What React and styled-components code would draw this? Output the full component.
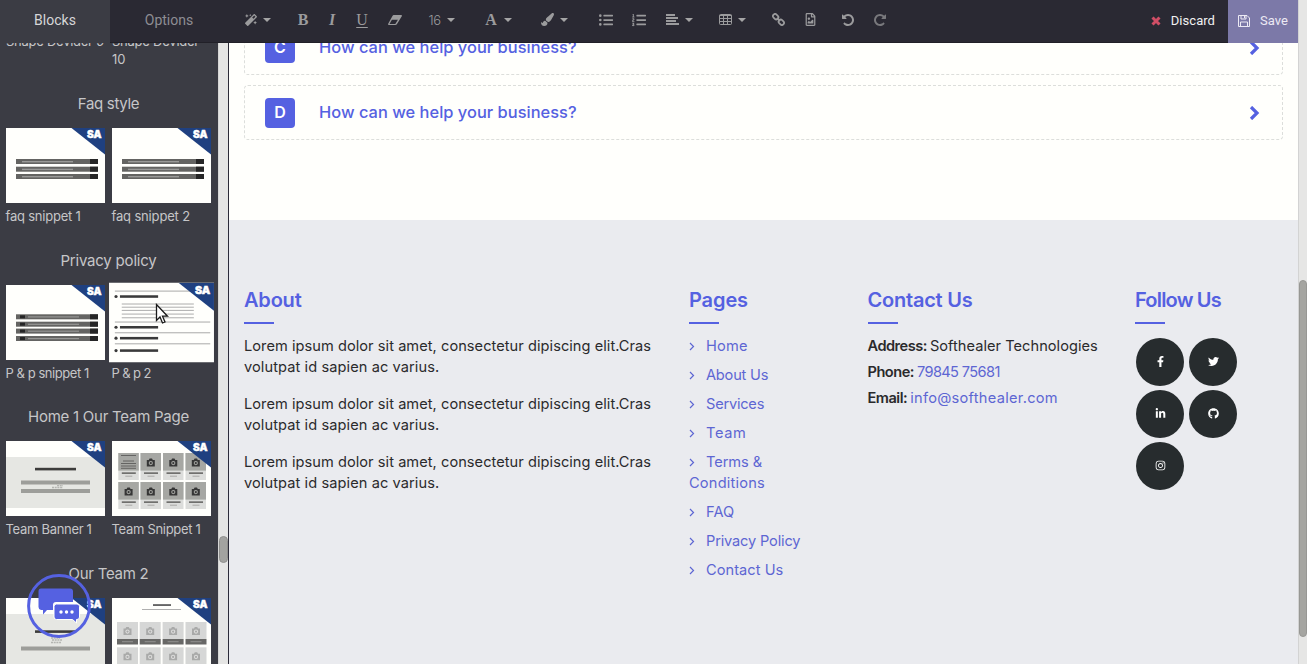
import React from "react";
import styled, { createGlobalStyle, css } from "styled-components";
import {
  FaMagic, FaPaintBrush, FaListUl, FaListOl, FaRegFileImage,
  FaFacebookF, FaTwitter, FaLinkedinIn, FaGithub, FaInstagram,
} from "react-icons/fa";

const blue = "#5561e1";
const link = "#5d66d3";

const GlobalStyle = createGlobalStyle`
  * { box-sizing: border-box; }
  body { margin: 0; font-family: Inter, "Open Sans", sans-serif; }
  svg { display: block; flex: none; }
`;

const Page = styled.div`
  position: relative;
  display: flex;
  width: 1307px;
  height: 664px;
  overflow: hidden;
  background: #fffffc;
`;
const Editor = styled.div`
  display: flex;
  flex-direction: column;
  width: 1298px;
  height: 100%;
`;
const Workspace = styled.div`
  display: flex;
  flex: 1;
  min-height: 0;
`;
const Txt = styled.span`
  letter-spacing: ${(p) => p.$ls || 0}px;
  white-space: nowrap;
`;

/* Top bar */
const TopBar = styled.header`
  display: flex;
  flex: none;
  height: 43px;
  background: #2a2933;
  border-bottom: 1px solid #212028;
  font-family: Roboto, sans-serif;
`;
const Tab = styled.div`
  width: ${(p) => p.$w}px;
  height: 43px;
  line-height: 41px;
  text-align: center;
  font-size: 14px;
  color: ${(p) => (p.$active ? "#d6d6d8" : "#8e8d93")};
  background: ${(p) => (p.$active ? "#3b3c44" : "transparent")};
`;
const Tools = styled.div`
  display: flex;
  align-items: center;
  flex: 1;
  height: 39px;
  color: #9b9b9d;
`;
const Tool = styled.div`
  display: flex;
  align-items: center;
  justify-content: center;
  width: ${(p) => p.$w}px;
  margin-left: ${(p) => p.$ml}px;
  opacity: ${(p) => (p.$dim ? 0.7 : 1)};
`;
const Caret = styled.i`
  margin-left: ${(p) => p.$ml}px;
  border: 4px solid transparent;
  border-top-color: #a5a5a6;
  border-bottom: 0;
`;
const Glyph = styled.span`
  font: bold 16px/20px "Liberation Serif", serif;
  ${(p) => p.$italic && css`font-style: italic;`}
  ${(p) => p.$under && css`font-weight: normal; text-decoration: underline; text-underline-offset: 2px;`}
`;
const FontSize = styled.span`
  font: 300 13px Inter, sans-serif;
  letter-spacing: -0.5px;
`;
const Discard = styled.div`
  display: flex;
  align-items: center;
  gap: 10px;
  height: 41px;
  padding-right: 13px;
  font-size: 13px;
  letter-spacing: 0.05px;
  color: #f1f1f2;
`;
const Save = styled(Discard)`
  width: 70px;
  height: 43px;
  padding: 0 0 2px 10px;
  background: #7c79a8;
  color: #eceaf4;
`;

/* Snippet sidebar */
const Sidebar = styled.aside`
  width: 218px;
  background: #3b3c44;
  overflow: hidden;
  color: #c6c6c8;
`;
const SidebarTrack = styled.div`
  width: 11px;
  padding-top: 493px;
  background: #e5e5e4;
  border-left: 1px solid #d6d6d5;
  border-right: 1px solid #2c2b38;
`;
const SidebarThumb = styled.div`
  height: 27px;
  border-radius: 5px;
  background: #a3a3a0;
  border: 1px solid #8f8f8d;
`;
const Cells = styled.div`
  display: grid;
  grid-template-columns: 99px 99px;
  column-gap: 7px;
  padding-left: 6px;
`;
const ScrolledRow = styled(Cells)`
  height: 48px;
  margin-top: -11px;
  font-size: 13px;
  line-height: 18px;
`;
const Section = styled.section`
  height: 156.6px;
`;
const SectionTitle = styled.h3`
  margin: 0;
  height: 48px;
  width: 217px;
  line-height: 48px;
  text-align: center;
  font-size: 15px;
  font-weight: 400;
`;
const Label = styled.div`
  height: 27px;
  margin-left: -0.5px;
  line-height: 27px;
  font-size: 13px;
`;
const Preview = styled.svg`
  width: 99px;
  height: 75px;
  background: #fffffc;
  ${(p) => p.$hover && css`transform: scale(1.06);`}
`;

/* Page canvas */
const Canvas = styled.main`
  flex: 1;
  min-width: 0;
  overflow: hidden;
`;
const Faq = styled.div`
  display: flex;
  flex-direction: column;
  gap: 10px;
  height: 200px;
  margin: -23px 15px 0;
`;
const FaqItem = styled.div`
  display: flex;
  align-items: center;
  height: 55px;
  flex: none;
  padding: 0 22px 0 20px;
  border: 1px dashed #dcdedb;
  border-radius: 4px;
  color: ${blue};
  font-size: 16px;
  font-weight: 500;
`;
const Badge = styled.span`
  width: 30px;
  height: 30px;
  margin-right: 24px;
  border-radius: 4px;
  background: ${blue};
  color: #fff;
  text-align: center;
  line-height: 29px;
  font-weight: 600;
`;
const Question = styled.span`
  flex: 1;
  padding-bottom: 2px;
  font-size: 16.4px;
  letter-spacing: 0.03px;
`;
const Footer = styled.footer`
  display: grid;
  grid-template-columns: 445px 178.5px 267.5px 1fr;
  height: 444px;
  padding: 67px 0 0 15px;
  background: #eaebef;
  color: #2a2a2c;
  font-size: 14.6px;
  line-height: 21px;
`;
const Heading = styled.h4`
  position: relative;
  margin: 0 0 12px;
  height: 37px;
  line-height: 26px;
  font-size: 20px;
  font-weight: 600;
  color: ${blue};
  letter-spacing: ${(p) => p.$ls}px;
  &::after {
    content: "";
    position: absolute;
    left: 0;
    bottom: 0;
    width: 30px;
    height: 2px;
    background: ${blue};
  }
`;
const Paragraph = styled.p`
  margin: 0 0 16px;
`;
const NavItem = styled.a`
  display: block;
  margin-bottom: 8px;
  color: ${link};
`;
const Chevron = styled.svg`
  && { display: inline-block; }
  margin-right: 11px;
`;
const ContactLine = styled.div`
  height: 21px;
  margin-bottom: 5px;
  white-space: nowrap;
  b { font-weight: 600; letter-spacing: -0.5px; margin-right: 3px; }
  a { color: ${link}; }
`;
const Socials = styled.div`
  display: grid;
  grid-template-columns: 48px 48px;
  gap: 4px 5px;
  padding: 2px 0 0 1px;
`;
const Social = styled.a`
  display: flex;
  align-items: center;
  justify-content: center;
  height: 48px;
  padding-bottom: 1px;
  border-radius: 50%;
  background: #272c2e;
  color: #fff;
`;
const PageTrack = styled.div`
  width: 9px;
  padding-top: 280px;
  background: #e6e6e5;
  border-left: 1px solid #d3d3d3;
`;
const PageThumb = styled.div`
  height: 357px;
  border-radius: 5px;
  background: #a5a5a1;
  border: 1px solid #979794;
`;

/* Overlays */
const Chat = styled.div`
  position: absolute;
  left: 27px;
  top: 574px;
`;
const Pointer = styled.div`
  position: absolute;
  left: 155px;
  top: 303px;
`;

const Ribbon = () => (
  <>
    <path d="M65.5 0H99V26.5Z" fill="#1f4080" />
    <text x="81" y="10.4" fontSize="10" fontWeight="900" fontFamily="Inter, sans-serif" fill="#fff" stroke="#fff" strokeWidth="0.4" textLength="14.5" lengthAdjust="spacingAndGlyphs">SA</text>
  </>
);

const FaqArt = () => [31, 38.7, 46].map((y) => (
  <g key={y}>
    <rect x="10" y={y} width="82" height="5" fill="#646462" />
    <rect x="84" y={y} width="8" height="5" fill="#262626" />
    <rect x="16" y={y + 2} width="51" height="1.4" fill="#9a9a98" />
  </g>
));
const PolicyArt = () => [29.3, 36.7, 43.6, 51].map((y) => (
  <g key={y}>
    <rect x="10" y={y} width="82" height="5" fill="#646462" />
    <rect x="84" y={y} width="8" height="5" fill="#262626" />
    <rect x="14" y={y + 1} width="5" height="3" fill="#262626" />
    <rect x="22" y={y + 2} width="51" height="1.2" fill="#969694" />
  </g>
));
const PolicyOpenArt = () => (
  <>
    {[7.8, 37, 47.2, 57.6].map((y) => <rect key={y} x="5.5" y={y - 0.3} width="90" height="0.7" fill="#8c8c8c" />)}
    {[20, 23, 26, 29.5, 33].map((y) => <rect key={y} x="12" y={y - 0.4} width="68" height="0.9" fill="#a9a9a9" />)}
    {[13, 42, 52.3, 64].map((y) => (
      <g key={y} fill="#3a3a3a">
        <circle cx="6.6" cy={y} r="1.5" />
        <rect x="10.3" y={y - 1.2} width="36" height="2.4" />
      </g>
    ))}
  </>
);
const BannerArt = ({ second }) => (
  <>
    <rect y="16" width="99" height={second ? 59 : 51} fill="#e6e7e3" />
    <rect x="29" y={second ? 32.3 : 26.8} width="41" height="2.6" fill="#3c3c3b" />
    {(second ? [48.5] : [39.5, 48]).map((y) => <rect key={y} x="15" y={y} width="69" height="4" fill="#9d9e9a" />)}
    <path d={second ? "M45 40H54M46 42H56M45 44.5H55" : "M51 44.7H57M46 46.5H57"} stroke="#b4b5b1" strokeWidth="1.3" strokeDasharray="2 0.7" />
  </>
);
const Camera = ({ x, y, fill, lens }) => (
  <g transform={`translate(${x} ${y})`}>
    <path d="M-4 -2.5H-2L-1.2 -4H1.2L2 -2.5H4V4H-4Z" fill={fill} />
    <circle cy="0.6" r="2.1" fill={lens} />
    <circle cy="0.6" r="1.1" fill={fill} />
  </g>
);
const TeamArt = () => [12, 41].map((y) => [6.3, 28.5, 51, 73.5].map((x, i) => (
  <g key={x + y}>
    <rect x={x} y={y} width="20.5" height="27" fill="#dcdddb" />
    <rect x={x} y={y} width="20.5" height="17.6" fill="#a6a7a3" />
    {y === 12 && i === 0 ? (
      <path d="M9 14.5H24M11 20H22M9 22.5H24M9 25H24M9 27.3H24" stroke="#5c5c5a" strokeWidth="0.9" />
    ) : (
      <Camera x={x + 10.3} y={y + 9.5} fill="#363636" lens="#a6a7a3" />
    )}
    <rect x={x + 3.5} y={y + 19.3} width="14" height="1.7" fill="#70706e" />
    <rect x={x + 7} y={y + 22.6} width="7" height="1.3" fill="#b4b4b2" />
  </g>
)));
const TeamGridArt = () => (
  <>
    <rect x="41" y="6.2" width="18" height="1.7" fill="#555" />
    <rect x="30" y="11" width="39" height="0.9" fill="#a6a6a6" />
    {[24, 49.3].map((y) => [5, 27.7, 50.6, 73.5].map((x) => (
      <g key={x + y}>
        <rect x={x} y={y} width="21" height="17" fill="#d6d7d6" />
        <Camera x={x + 10.5} y={y + 9} fill="#a9aaa9" lens="#dededd" />
        <rect x={x} y={y + 17} width="21" height="5.5" fill="#686866" />
        <rect x={x + 5} y={y + 19.3} width="11" height="0.9" fill="#989896" />
      </g>
    )))}
  </>
);

const sections = [
  { title: "Faq style", ls: -0.3, items: [
    { label: "faq snippet 1", ls: -0.22, art: <FaqArt /> },
    { label: "faq snippet 2", ls: -0.16, art: <FaqArt /> }] },
  { title: "Privacy policy", ls: -0.2, items: [
    { label: "P & p snippet 1", ls: -0.45, art: <PolicyArt /> },
    { label: "P & p 2", ls: -0.6, art: <PolicyOpenArt />, hover: true }] },
  { title: "Home 1 Our Team Page", ls: -0.25, items: [
    { label: "Team Banner 1", ls: -0.3, art: <BannerArt /> },
    { label: "Team Snippet 1", ls: -0.3, art: <TeamArt /> }] },
  { title: "Our Team 2", ls: -0.25, items: [
    { label: "", art: <BannerArt second /> },
    { label: "", art: <TeamGridArt /> }] },
];

const pages = [
  ["Home", 0.2], ["About Us", -0.2], ["Services", -0.22], ["Team", 0.6], ["Terms &", -0.05, "Conditions", 0.2],
  ["FAQ", 0.1], ["Privacy Policy", -0.16], ["Contact Us", 0.05],
];

const Eraser = () => (
  <svg width="14" height="10" viewBox="0 0 14 10">
    <path fillRule="evenodd" d="M5.6 0H13.2Q14.3 .2 13.8 1.3L9 9Q8.4 10 7.4 10H.8Q-.3 9.8 .2 8.7L4.6 .8Q5 0 5.6 0ZM3.9 4.7L1.5 8.9H7.3L9.9 4.7Z" fill="currentColor" />
  </svg>
);
const TableIcon = () => (
  <svg width="13" height="11" viewBox="0 0 13 11" fill="none" stroke="currentColor">
    <rect x=".5" y=".5" width="12" height="10" rx="1" />
    <path d="M.5 1.5H12.5M.5 4.5H12.5M.5 7.5H12.5M4.5 1V10.5M8.5 1V10.5" />
  </svg>
);
const LinkIcon = () => (
  <svg width="13" height="13" viewBox="0 0 13 13" fill="none" stroke="currentColor" strokeWidth="1.7">
    <rect x="-2.9" y="-2.1" width="5.8" height="4.2" rx="2" transform="translate(3.7 3.7) rotate(45)" />
    <rect x="-2.9" y="-2.1" width="5.8" height="4.2" rx="2" transform="translate(9.3 9.3) rotate(45)" />
    <path d="M4.8 4.8L8.2 8.2" />
  </svg>
);
const UndoIcon = ({ flip }) => (
  <svg width="12" height="12" viewBox="0 0 1536 1536" fill="currentColor">
    <path transform={flip ? "translate(1536 0) scale(-1 1)" : undefined} d="M1536 768q0 156-61 298t-164 245-245 164-298 61q-172 0-327-72.5t-264-204.5q-7-10-6.5-22.5t8.5-20.5l137-138q10-9 25-9 16 2 23 12 73 95 179 147t225 52q104 0 198.5-40.5t163.5-109.5 109.5-163.5 40.5-198.5-40.5-198.5-109.5-163.5-163.5-109.5-198.5-40.5q-98 0-188 35.5t-160 101.5l137 138q31 30 14 69-17 40-59 40h-448q-26 0-45-19t-19-45v-448q0-42 40-59 39-17 69 14l130 129q107-101 244.5-156.5t284.5-55.5q156 0 298 61t245 164 164 245 61 298z" />
  </svg>
);
const FloppyIcon = () => (
  <svg width="12" height="12" viewBox="0 0 12 12" fill="none" stroke="currentColor">
    <path d="M.5 .5H9L11.5 3V11.5H.5ZM3 .5V4H8V.5M2.5 11.5V7H9.5V11.5" />
    <path d="M6.5 1V3.2" />
  </svg>
);

export default function App() {
  return (
    <Page>
      <GlobalStyle />
      <Editor>
        <TopBar>
          <Tab $w={110} $active>Blocks</Tab>
          <Tab $w={118}>Options</Tab>
          <Tools>
            <Tool $ml={17} $w={12}><FaMagic size={12} /></Tool><Caret $ml={6} />
            <Tool $ml={26} $w={12}><Glyph>B</Glyph></Tool>
            <Tool $ml={17} $w={12}><Glyph $italic>I</Glyph></Tool>
            <Tool $ml={18} $w={12}><Glyph $under>U</Glyph></Tool>
            <Tool $ml={20} $w={14}><Eraser /></Tool>
            <Tool $ml={26} $w={13}><FontSize>16</FontSize></Tool><Caret $ml={6} />
            <Tool $ml={29} $w={14}><Glyph>A</Glyph></Tool><Caret $ml={6} />
            <Tool $ml={29} $w={13}><FaPaintBrush size={13} /></Tool><Caret $ml={6} />
            <Tool $ml={31} $w={13}><FaListUl size={14} /></Tool>
            <Tool $ml={20} $w={14}><FaListOl size={14} /></Tool>
            <Tool $ml={20} $w={13}>
              <svg width="13" height="11" viewBox="0 0 13 11"><path d="M0 1H9M0 4H12M0 7H10M0 10H13" stroke="currentColor" strokeWidth="2" /></svg>
            </Tool><Caret $ml={6} />
            <Tool $ml={26} $w={13}><TableIcon /></Tool><Caret $ml={6} />
            <Tool $ml={26} $w={13}><LinkIcon /></Tool>
            <Tool $ml={20} $w={11}><FaRegFileImage size={13} /></Tool>
            <Tool $ml={26} $w={12}><UndoIcon /></Tool>
            <Tool $ml={20} $w={12} $dim><UndoIcon flip /></Tool>
          </Tools>
          <Discard>
            <svg width="10" height="10" viewBox="0 0 10 10"><path d="M1.5 1.5L8.5 8.5M8.5 1.5L1.5 8.5" stroke="#d04e66" strokeWidth="3" /></svg>
            Discard
          </Discard>
          <Save><FloppyIcon />Save</Save>
        </TopBar>
        <Workspace>
          <Sidebar>
            <ScrolledRow>
              <Txt $ls={-0.26}>Shape Devider 9</Txt>
              <div><Txt $ls={-0.24}>Shape Devider</Txt><br />10</div>
            </ScrolledRow>
            {sections.map((s) => (
              <Section key={s.title}>
                <SectionTitle><Txt $ls={s.ls}>{s.title}</Txt></SectionTitle>
                <Cells>
                  {s.items.map((it, i) => (
                    <div key={i}>
                      <Preview viewBox="0 0 99 75" $hover={it.hover}>{it.art}<Ribbon /></Preview>
                      <Label><Txt $ls={it.ls}>{it.label}</Txt></Label>
                    </div>
                  ))}
                </Cells>
              </Section>
            ))}
          </Sidebar>
          <SidebarTrack><SidebarThumb /></SidebarTrack>
          <Canvas>
            <Faq>
              {["C", "D"].map((l) => (
                <FaqItem key={l}>
                  <Badge>{l}</Badge>
                  <Question>How can we help your business?</Question>
                  <svg width="11" height="14" viewBox="0 0 11 14"><path d="M2 1L8 7L2 13" fill="none" stroke={blue} strokeWidth="3.2" /></svg>
                </FaqItem>
              ))}
            </Faq>
            <Footer>
              <div>
                <Heading $ls={-0.2}>About</Heading>
                {[0, 1, 2].map((n) => (
                  <Paragraph key={n}>
                    <Txt $ls={0.05}>Lorem ipsum dolor sit amet, consectetur dipiscing elit.Cras</Txt><br />
                    <Txt $ls={0.09}>volutpat id sapien ac varius.</Txt>
                  </Paragraph>
                ))}
              </div>
              <div>
                <Heading $ls={-0.11}>Pages</Heading>
                {pages.map(([t, ls, t2, ls2]) => (
                  <NavItem key={t}>
                    <Chevron width="6" height="9" viewBox="0 0 6 9"><path d="M1 1L4.5 4.5L1 8" fill="none" stroke={link} strokeWidth="1.2" /></Chevron>
                    <Txt $ls={ls}>{t}</Txt>
                    {t2 && <><br /><Txt $ls={ls2}>{t2}</Txt></>}
                  </NavItem>
                ))}
              </div>
              <div>
                <Heading $ls={-0.22}>Contact Us</Heading>
                <ContactLine><b>Address:</b><Txt $ls={0.04}>Softhealer Technologies</Txt></ContactLine>
                <ContactLine><b>Phone:</b><Txt as="a" $ls={-0.62}>79845 75681</Txt></ContactLine>
                <ContactLine><b>Email:</b><Txt as="a" $ls={0.29}>info@softhealer.com</Txt></ContactLine>
              </div>
              <div>
                <Heading $ls={-0.8}>Follow Us</Heading>
                <Socials>
                  {[FaFacebookF, FaTwitter, FaLinkedinIn, FaGithub, FaInstagram].map((Icon, i) => (
                    <Social key={i}><Icon size={11} /></Social>
                  ))}
                </Socials>
              </div>
            </Footer>
          </Canvas>
        </Workspace>
      </Editor>
      <PageTrack><PageThumb /></PageTrack>
      <Chat>
        <svg width="64" height="64" viewBox="0 0 64 64">
          <circle cx="32" cy="32" r="30.4" fill="none" stroke={blue} strokeWidth="3" />
          <path d="M14 14.5H43Q46 14.5 46 17.5V28H29Q26 28 26 31V36H20L16 40.5V36H14Q11.5 35.5 11.5 33V17.5Q11.5 14.5 14 14.5Z" fill={blue} />
          <path d="M29.5 30H50Q52.5 30 52.5 32.5V43Q52.5 45.5 50 45.5H49.5V49L45.5 45.5H29.5Q27 45.5 27 43V32.5Q27 30 29.5 30Z" fill={blue} stroke="#fffffc" strokeWidth="1" />
          <circle cx="34" cy="38" r="1.7" fill="#fff" /><circle cx="39.5" cy="38" r="1.7" fill="#fff" /><circle cx="45" cy="38" r="1.7" fill="#fff" />
        </svg>
      </Chat>
      <Pointer>
        <svg width="14" height="22" viewBox="0 0 14 22">
          <path d="M1.5 1.5V17.5L5 14L7.5 20L10 19L7.5 13.2H12.5Z" fill="#fff" stroke="#1a1a1a" strokeWidth="1.3" />
        </svg>
      </Pointer>
    </Page>
  );
}
